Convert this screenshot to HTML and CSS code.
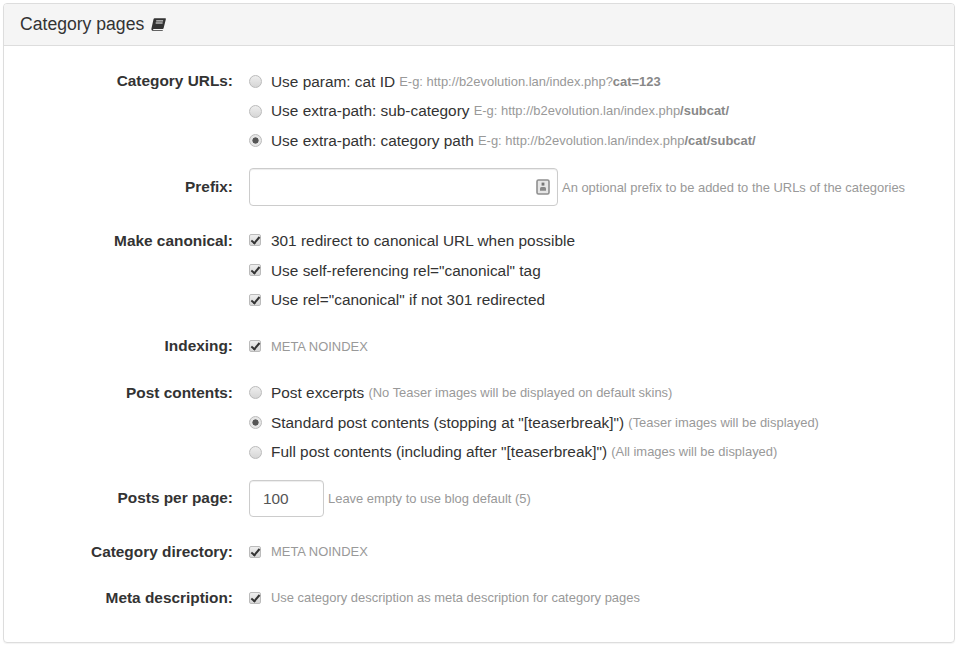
FILE: index.html
```html
<!DOCTYPE html>
<html lang="en">
<head>
  <meta charset="UTF-8">
  <title>Category pages</title>
  <link rel="stylesheet" href="styles.css">
</head>
<body>
  <div class="panel">
    <div class="panel-heading">
      <h3>Category pages</h3>
      <svg class="book" width="15" height="13" viewBox="0 0 15 13">
        <path d="M3.6 0.3H14.3C14.8 0.3 15 0.7 14.9 1.1L12.6 10.2C12.5 10.7 12.1 11 11.6 11H2.6C2 11 1.8 11.4 1.9 11.6C2 11.9 2.3 12 2.7 12H11.9L11.6 12.8H2.2C1 12.8 0.2 11.9 0.4 10.7L2.5 1.2C2.6 0.7 3.1 0.3 3.6 0.3Z" fill="#333"/>
        <path d="M5.2 2.9H12.1M4.7 5H11.6" stroke="#f5f5f5" stroke-width="1" fill="none"/>
      </svg>
    </div>
    <div class="panel-body">

      <div class="group tight">
        <div class="label">Category URLs:</div>
        <div class="controls">
          <label class="option"><input type="radio" name="url"> <span>Use param: cat ID</span> <small>E-g: http://b2evolution.lan/index.php?<b>cat=123</b></small></label>
          <label class="option"><input type="radio" name="url"> <span>Use extra-path: sub-category</span> <small>E-g: http://b2evolution.lan/index.php<b>/subcat/</b></small></label>
          <label class="option"><input type="radio" name="url" checked> <span>Use extra-path: category path</span> <small>E-g: http://b2evolution.lan/index.php<b>/cat/subcat/</b></small></label>
        </div>
      </div>

      <div class="group">
        <div class="label label-input">Prefix:</div>
        <div class="controls-inline">
          <div class="input-wrap">
            <input class="text-input prefix" type="text">
            <svg class="contact" width="14" height="16" viewBox="0 0 14 16">
              <rect x="1" y="1" width="12" height="14" rx="1.5" fill="#e6e6e6" stroke="#8f8f8f" stroke-width="1.6"/>
              <rect x="5.6" y="3.6" width="2.8" height="3" fill="#777"/>
              <path d="M4 11.8V9.4C4 8.4 5 8 7 8S10 8.4 10 9.4V11.8Z" fill="#888"/>
            </svg>
          </div>
          <small class="hint">An optional prefix to be added to the URLs of the categories</small>
        </div>
      </div>

      <div class="group wide">
        <div class="label">Make canonical:</div>
        <div class="controls">
          <label class="option"><input type="checkbox" checked> <span>301 redirect to canonical URL when possible</span></label>
          <label class="option"><input type="checkbox" checked> <span>Use self-referencing rel="canonical" tag</span></label>
          <label class="option"><input type="checkbox" checked> <span>Use rel="canonical" if not 301 redirected</span></label>
        </div>
      </div>

      <div class="group wide">
        <div class="label">Indexing:</div>
        <div class="controls">
          <label class="option"><input type="checkbox" checked> <small>META NOINDEX</small></label>
        </div>
      </div>

      <div class="group tight post-group">
        <div class="label">Post contents:</div>
        <div class="controls">
          <label class="option"><input type="radio" name="post"> <span>Post excerpts</span> <small>(No Teaser images will be displayed on default skins)</small></label>
          <label class="option"><input type="radio" name="post" checked> <span>Standard post contents (stopping at "[teaserbreak]")</span> <small>(Teaser images will be displayed)</small></label>
          <label class="option"><input type="radio" name="post"> <span>Full post contents (including after "[teaserbreak]")</span> <small>(All images will be displayed)</small></label>
        </div>
      </div>

      <div class="group">
        <div class="label label-input">Posts per page:</div>
        <div class="controls-inline">
          <input class="text-input posts" type="text" value="100">
          <small>Leave empty to use blog default (5)</small>
        </div>
      </div>

      <div class="group">
        <div class="label">Category directory:</div>
        <div class="controls">
          <label class="option"><input type="checkbox" checked> <small>META NOINDEX</small></label>
        </div>
      </div>

      <div class="group">
        <div class="label">Meta description:</div>
        <div class="controls">
          <label class="option"><input type="checkbox" checked> <small>Use category description as meta description for category pages</small></label>
        </div>
      </div>

    </div>
  </div>
</body>
</html>
```

FILE: styles.css
```css
body {
  margin: 0;
  padding: 3px;
  background: #fff;
  color: #333;
  font-family: "Liberation Sans", Arial, sans-serif;
  font-size: 15.4px;
}

.panel {
  width: 952px;
  height: 640px;
  box-sizing: border-box;
  border: 1px solid #ddd;
  border-radius: 4px;
  box-shadow: 0 1px 1px rgba(0, 0, 0, 0.05);
}

.panel-heading {
  display: flex;
  align-items: center;
  gap: 7px;
  height: 42px;
  box-sizing: border-box;
  padding: 0 16px;
  background: #f5f5f5;
  border-bottom: 1px solid #ddd;
  border-radius: 3px 3px 0 0;
}

.panel-heading h3 {
  margin: 0;
  font-size: 17.6px;
  font-weight: normal;
}

.panel-body {
  padding-top: 24.8px;
}

.group {
  display: flex;
  margin-bottom: 24px;
}

.group.wide {
  margin-bottom: 24.4px;
}

.group.tight {
  margin-bottom: 16px;
}

.group.post-group {
  margin-bottom: 16.6px;
}

.label {
  width: 229px;
  flex-shrink: 0;
  margin-top: -0.4px;
  text-align: right;
  font-weight: bold;
  line-height: 22px;
}

.label-input {
  line-height: 37.6px;
}

.controls {
  display: flex;
  flex-direction: column;
  gap: 7.6px;
  margin-left: 16px;
}

.controls-inline {
  display: flex;
  align-items: center;
  gap: 4px;
  margin-left: 16px;
}

.option {
  display: flex;
  align-items: center;
  height: 22px;
  line-height: 22px;
}

.option input {
  appearance: none;
  flex-shrink: 0;
  width: 13px;
  height: 13px;
  margin: 0 9px 0 0;
  border: 1px solid #bbb;
  background: linear-gradient(#eee, #d6d6d6);
}

.option input[type="radio"] {
  border-radius: 50%;
}

.option input[type="radio"]:checked {
  background: radial-gradient(circle, #555 0, #555 2.8px, #e6e6e6 3.4px);
}

.option input[type="checkbox"] {
  width: 12px;
  height: 12px;
  margin: -1px 10px 0 0;
  border-radius: 2px;
  position: relative;
}

.option input[type="checkbox"]:checked::after {
  content: "";
  position: absolute;
  left: 3px;
  top: 0;
  width: 3px;
  height: 7px;
  border: solid #333;
  border-width: 0 2px 2px 0;
  transform: rotate(40deg);
}

.option span {
  margin-right: 4.2px;
}

small {
  font-size: 12.94px;
  color: #999;
}

small b {
  color: #888;
}

.hint {
  margin-top: 1px;
}

.input-wrap {
  position: relative;
  display: flex;
  height: 38px;
}

.text-input {
  box-sizing: border-box;
  height: 37.6px;
  border: 1px solid #ccc;
  border-radius: 4px;
  background: #fff;
  color: #555;
  font: 15.4px "Liberation Sans", Arial, sans-serif;
  box-shadow: inset 0 1px 1px rgba(0, 0, 0, 0.075);
  padding: 0 13px;
}

.prefix {
  width: 309px;
}

.posts {
  width: 75px;
}

.contact {
  position: absolute;
  right: 8px;
  top: 11px;
}
```
